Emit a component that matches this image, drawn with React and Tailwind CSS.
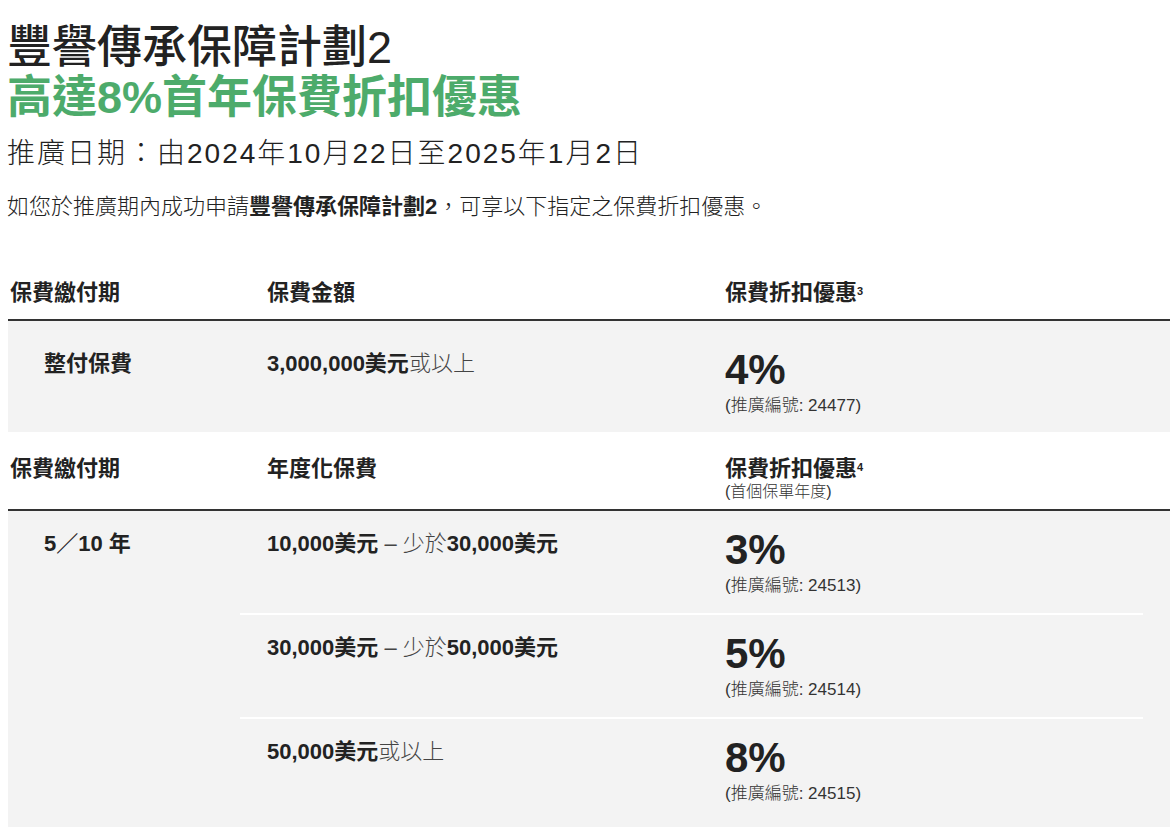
import React from 'react';

const font = "font-['Liberation_Sans','Noto_Sans_CJK_TC',sans-serif]";

const tiers = [
  { from: '10,000美元', to: '30,000美元', rate: '3%', code: '24513' },
  { from: '30,000美元', to: '50,000美元', rate: '5%', code: '24514' },
  { from: '50,000美元', rate: '8%', code: '24515' },
];

const Rate = ({ rate, code }) => (
  <div>
    <div className="text-[42px] leading-[42px] font-bold text-[#222]">{rate}</div>
    <div className="mt-[5px] text-[17px] leading-[20px] font-light text-[#333]">(推廣編號: {code})</div>
  </div>
);

const HeaderRow = ({ amount, sup, note }) => (
  <div
    className={
      note
        ? 'flex items-start border-b-2 border-[#333] pb-[7px] text-[22px] leading-[26px] font-bold text-[#222]'
        : 'flex items-start border-b-2 border-[#333] pb-[13px] text-[22px] leading-[26px] font-bold text-[#222]'
    }
  >
    <div className="w-[232px] pl-[2px]">保費繳付期</div>
    <div className="w-[458px] pl-[27px]">{amount}</div>
    <div className="flex-1 pl-[27px]">
      <div>
        保費折扣優惠<sup className="text-[11px] font-bold">{sup}</sup>
      </div>
      {note && <div className="text-[16px] leading-[20px] font-light text-[#333]">{note}</div>}
    </div>
  </div>
);

export default function App() {
  return (
    <div className={`${font} bg-white min-h-[836px] pl-[7px] pr-[6px] pt-[23px] text-[#222]`}>
      <h1 className="text-[45px] leading-[50px] font-medium">豐譽傳承保障計劃2</h1>
      <h2 className="text-[45px] leading-[50px] font-bold text-[#4dab6b]">高達8%首年保費折扣優惠</h2>
      <p className="mt-[13px] text-[28px] leading-[36px] font-light tracking-[2px]">推廣日期：由2024年10月22日至2025年1月2日</p>
      <p className="mt-[20px] text-[22px] leading-[30px] font-light">
        如您於推廣期內成功申請<span className="font-bold">豐譽傳承保障計劃2</span>，可享以下指定之保費折扣優惠。
      </p>

      <div className="ml-[1px] mt-[58px]">
        <HeaderRow amount="保費金額" sup="3" />
        <div className="flex items-start bg-[#f3f3f3] text-[22px] leading-[26px]">
          <div className="w-[232px] pl-[36px] pt-[30px] font-bold">整付保費</div>
          <div className="w-[458px] pl-[27px] pt-[30px]">
            <span className="font-bold">3,000,000美元</span>
            <span className="font-light text-[#444]">或以上</span>
          </div>
          <div className="flex-1 pl-[27px] pt-[28px] pb-[16px]">
            <Rate rate="4%" code="24477" />
          </div>
        </div>

        <div className="mt-[24px]">
          <HeaderRow amount="年度化保費" sup="4" note="(首個保單年度)" />
        </div>
        <div className="flex items-start bg-[#f3f3f3] pb-[6px] text-[22px] leading-[26px]">
          <div className="w-[232px] pl-[36px] pt-[20px] font-bold">5／10 年</div>
          <div className="flex-1 mr-[27px]">
            {tiers.map((t, i) => (
              <div key={t.code} className={i > 0 ? 'flex items-start border-t-2 border-white' : 'flex items-start'}>
                <div className="w-[458px] pl-[27px] pt-[20px]">
                  <span className="font-bold">{t.from}</span>
                  {t.to ? (
                    <>
                      <span className="font-light text-[#444]"> – 少於</span>
                      <span className="font-bold">{t.to}</span>
                    </>
                  ) : (
                    <span className="font-light text-[#444]">或以上</span>
                  )}
                </div>
                <div className="flex-1 pl-[27px] pt-[18px] pb-[17px]">
                  <Rate rate={t.rate} code={t.code} />
                </div>
              </div>
            ))}
          </div>
        </div>
      </div>
    </div>
  );
}
